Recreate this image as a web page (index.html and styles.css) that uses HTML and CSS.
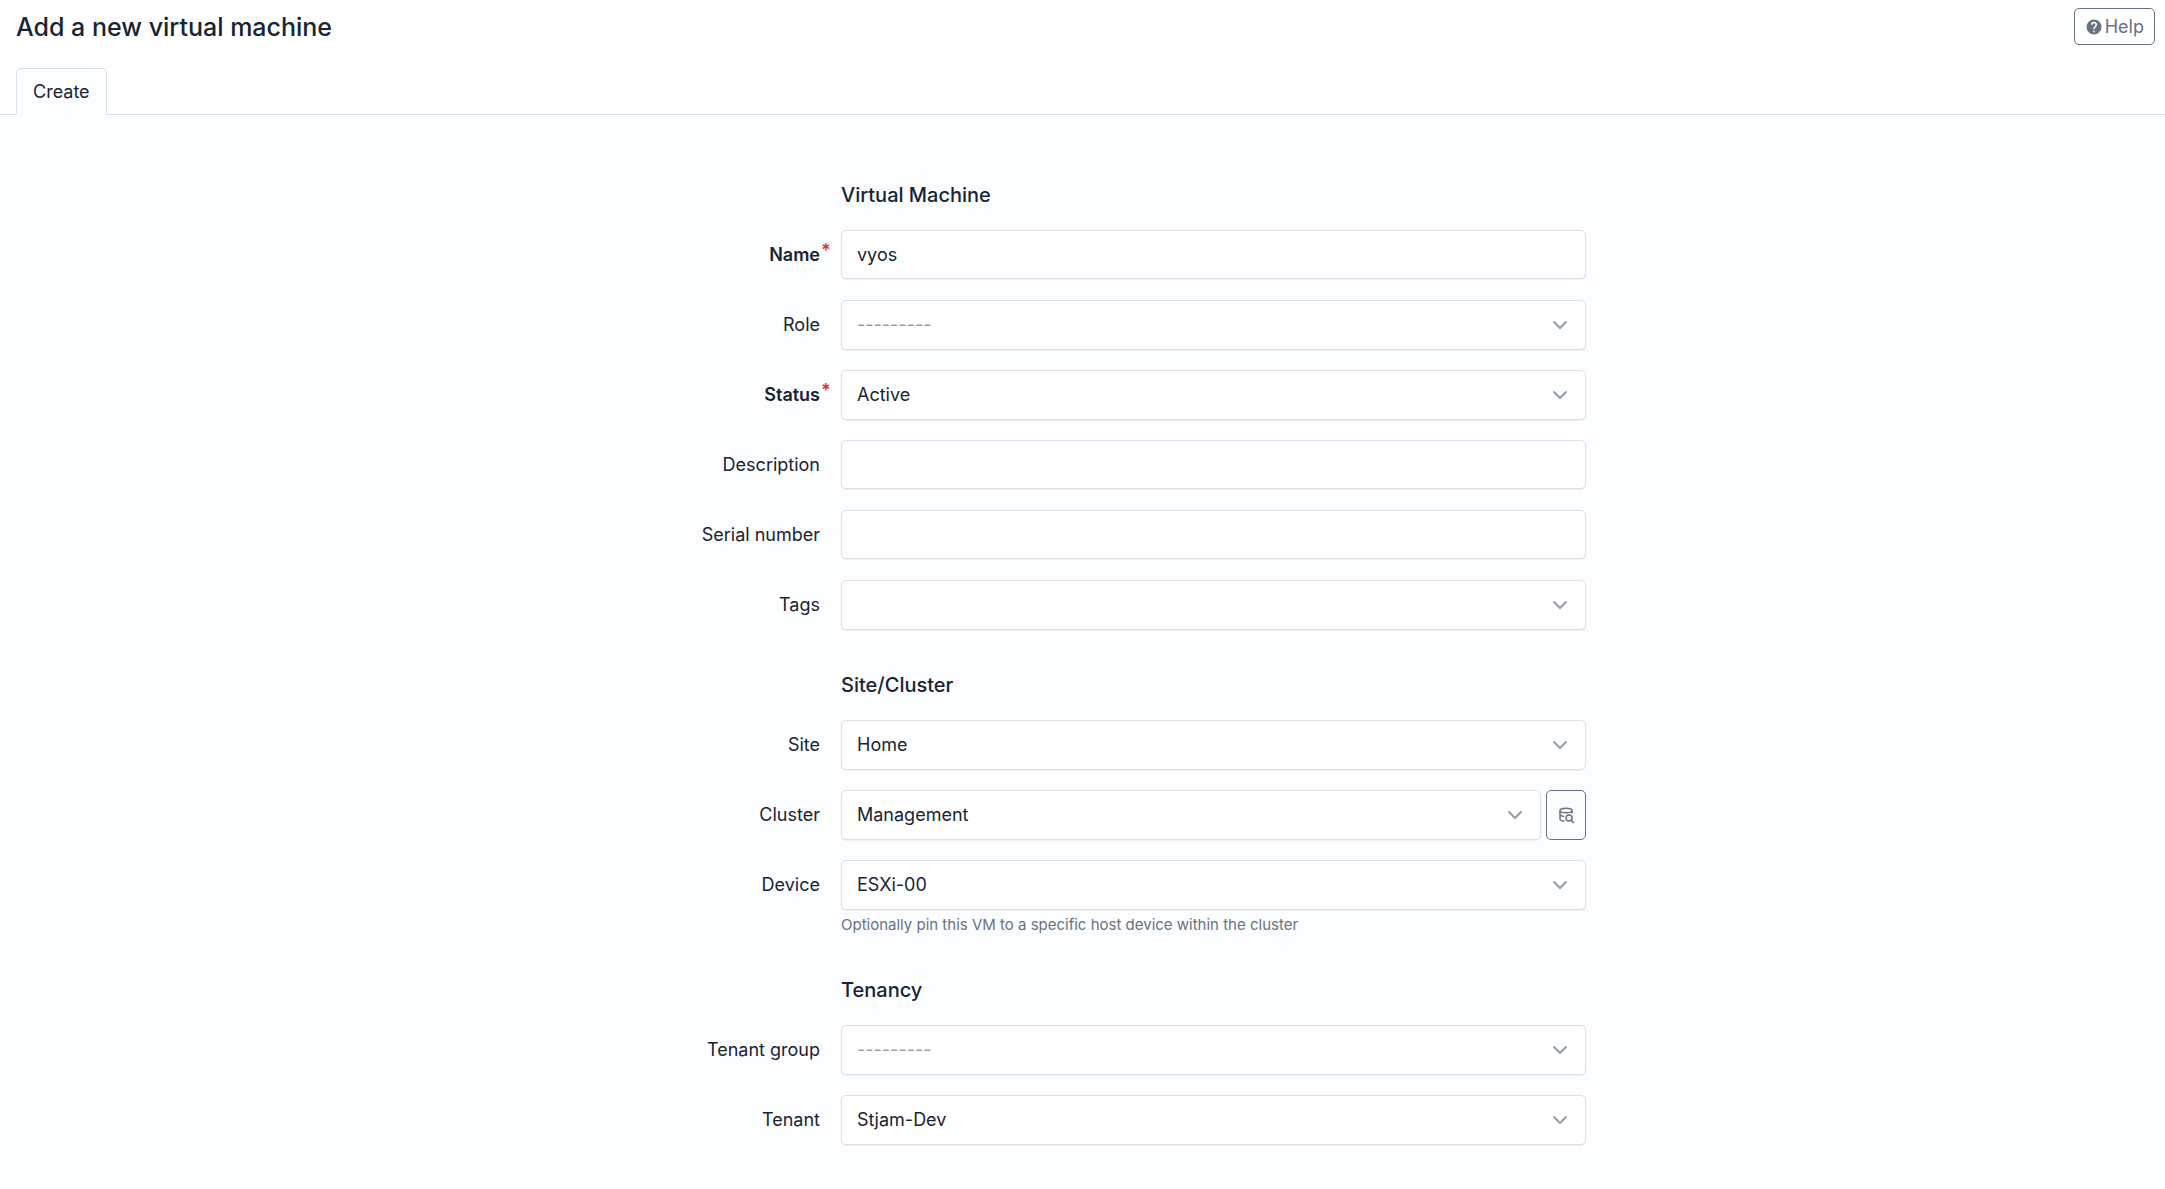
FILE: index.html
```html
<!DOCTYPE html>
<html lang="en">
<head>
<meta charset="utf-8">
<title>Add a new virtual machine</title>
<link rel="stylesheet" href="styles.css">
</head>
<body>
<svg class="sprite" aria-hidden="true">
  <symbol id="chevron" viewBox="0 0 16 16"><path d="M2 5l6 6 6-6" fill="none" stroke="currentColor" stroke-width="2" stroke-linecap="round" stroke-linejoin="round"/></symbol>
</svg>

<header class="page-header">
  <h1 class="page-title">Add a new virtual machine</h1>
  <button type="button" class="btn help-btn">
    <svg class="icon" viewBox="0 0 24 24" aria-hidden="true"><path fill="currentColor" d="M15.07,11.25L14.17,12.17C13.45,12.89 13,13.5 13,15H11V14.5C11,13.39 11.45,12.39 12.17,11.67L13.41,10.41C13.78,10.05 14,9.55 14,9C14,7.89 13.1,7 12,7A2,2 0 0,0 10,9H8A4,4 0 0,1 12,5A4,4 0 0,1 16,9C16,9.88 15.64,10.67 15.07,11.25M13,19H11V17H13M12,2A10,10 0 0,0 2,12A10,10 0 0,0 12,22A10,10 0 0,0 22,12C22,6.47 17.5,2 12,2Z"/></svg>
    Help
  </button>
</header>

<nav class="tabs">
  <a href="#create" class="tab" aria-current="page">Create</a>
</nav>

<main class="page-body" id="create">
  <form class="form">
    <section class="group">
      <h2 class="group-title">Virtual Machine</h2>
      <div class="row">
        <label class="label required" for="name">Name</label>
        <input class="control" id="name" type="text" value="vyos" required>
      </div>
      <div class="row">
        <label class="label" for="role">Role</label>
        <div class="select">
          <select class="control placeholder" id="role"><option>---------</option></select>
          <svg class="chevron" aria-hidden="true"><use href="#chevron"/></svg>
        </div>
      </div>
      <div class="row">
        <label class="label required" for="status">Status</label>
        <div class="select">
          <select class="control" id="status" required><option>Active</option></select>
          <svg class="chevron" aria-hidden="true"><use href="#chevron"/></svg>
        </div>
      </div>
      <div class="row">
        <label class="label" for="description">Description</label>
        <input class="control" id="description" type="text">
      </div>
      <div class="row">
        <label class="label" for="serial">Serial number</label>
        <input class="control" id="serial" type="text">
      </div>
      <div class="row">
        <label class="label" for="tags">Tags</label>
        <div class="select">
          <select class="control" id="tags"><option></option></select>
          <svg class="chevron" aria-hidden="true"><use href="#chevron"/></svg>
        </div>
      </div>
    </section>

    <section class="group">
      <h2 class="group-title">Site/Cluster</h2>
      <div class="row">
        <label class="label" for="site">Site</label>
        <div class="select">
          <select class="control" id="site"><option>Home</option></select>
          <svg class="chevron" aria-hidden="true"><use href="#chevron"/></svg>
        </div>
      </div>
      <div class="row">
        <label class="label" for="cluster">Cluster</label>
        <div class="with-button">
          <div class="select">
            <select class="control" id="cluster"><option>Management</option></select>
            <svg class="chevron" aria-hidden="true"><use href="#chevron"/></svg>
          </div>
          <button type="button" class="btn search-btn" aria-label="Advanced search">
            <svg class="icon" viewBox="0 0 24 24" fill="none" stroke="currentColor" stroke-width="2" aria-hidden="true"><ellipse cx="12" cy="6" rx="8" ry="3"/><path d="M4 6v11c0 1.700 2.500 3 6 3.200M20 6v4M4 11.500c1 1.500 3 2.200 5.500 2.400M22.500 22.500l-3.500-3.500"/><circle cx="16" cy="16" r="4"/></svg>
          </button>
        </div>
      </div>
      <div class="row">
        <label class="label" for="device">Device</label>
        <div class="select">
          <select class="control" id="device" aria-describedby="device-hint"><option>ESXi-00</option></select>
          <svg class="chevron" aria-hidden="true"><use href="#chevron"/></svg>
        </div>
        <p class="hint" id="device-hint">Optionally pin this VM to a specific host device within the cluster</p>
      </div>
    </section>

    <section class="group">
      <h2 class="group-title">Tenancy</h2>
      <div class="row">
        <label class="label" for="tenant-group">Tenant group</label>
        <div class="select">
          <select class="control placeholder" id="tenant-group"><option>---------</option></select>
          <svg class="chevron" aria-hidden="true"><use href="#chevron"/></svg>
        </div>
      </div>
      <div class="row">
        <label class="label" for="tenant">Tenant</label>
        <div class="select">
          <select class="control" id="tenant"><option>Stjam-Dev</option></select>
          <svg class="chevron" aria-hidden="true"><use href="#chevron"/></svg>
        </div>
      </div>
    </section>
  </form>
</main>
</body>
</html>
```
FILE: styles.css
```css
* {
  box-sizing: border-box;
}

body {
  margin: 0;
  min-height: 100vh;
  display: flex;
  flex-direction: column;
  background: #fff;
  color: #182433;
  font-family: Inter, "Liberation Sans", sans-serif;
  font-size: 18px;
  line-height: 24px;
}

h1,
h2,
p {
  margin: 0;
}

.sprite {
  display: none;
}

.page-header {
  display: flex;
  align-items: center;
  justify-content: space-between;
  padding: 8px 10px 0 16px;
}

.page-title {
  font-size: 25px;
  font-weight: 500;
  line-height: 36px;
}

.btn {
  display: flex;
  align-items: center;
  justify-content: center;
  border: 1px solid #667382;
  border-radius: 5px;
  background: transparent;
  color: #667382;
  font: inherit;
}

.icon {
  width: 18px;
  height: 18px;
}

.help-btn {
  height: 37px;
  gap: 2px;
  padding: 0 10px;
}

.tabs {
  display: flex;
  padding: 23px 16px 0;
  border-bottom: 1px solid #dadfe5;
}

.tab {
  margin-bottom: -1px;
  padding: 11px 16px 10px;
  border: 1px solid #dadfe5;
  border-bottom-color: #fcfdfe;
  border-radius: 5px 5px 0 0;
  background: #fcfdfe;
  color: inherit;
  text-decoration: none;
}

.page-body {
  flex: 1;
  padding: 66px 20px 44px;
  background: #fcfdfe;
}

.form {
  display: flex;
  flex-direction: column;
  gap: 41px;
  max-width: 1007px;
  margin: 0 auto;
}

.group {
  display: flex;
  flex-direction: column;
  gap: 20px;
}

.group-title {
  margin-left: 262px;
  font-size: 20px;
  font-weight: 500;
  line-height: 29px;
}

.row {
  display: grid;
  grid-template-columns: 241px 1fr;
  column-gap: 21px;
  min-height: 50px;
}

.label {
  padding-top: 13px;
  text-align: right;
}

.required {
  position: relative;
  font-weight: 600;
}

.required::after {
  content: "*";
  position: absolute;
  left: 100%;
  top: 9px;
  padding-left: 1px;
  color: #d63939;
}

.control {
  width: 100%;
  height: 49px;
  padding: 0 15px;
  border: 1px solid #dadfe5;
  border-radius: 5px;
  background: #fff;
  box-shadow: 0 1px 1px rgba(24, 36, 51, 0.06);
  color: inherit;
  font: inherit;
  appearance: none;
}

.select {
  position: relative;
}

.select .control {
  height: 50px;
  padding-right: 44px;
}

.select .placeholder {
  color: #929dab;
}

.chevron {
  position: absolute;
  right: 18px;
  top: 17px;
  width: 16px;
  height: 16px;
  color: #929dab;
  pointer-events: none;
}

.with-button {
  display: grid;
  grid-template-columns: 1fr 40px;
  gap: 5px;
}

.search-btn {
  height: 50px;
  padding: 0;
}

.hint {
  grid-column: 2;
  padding-top: 4px;
  color: #667382;
  font-size: 15px;
  line-height: 21px;
}
```
